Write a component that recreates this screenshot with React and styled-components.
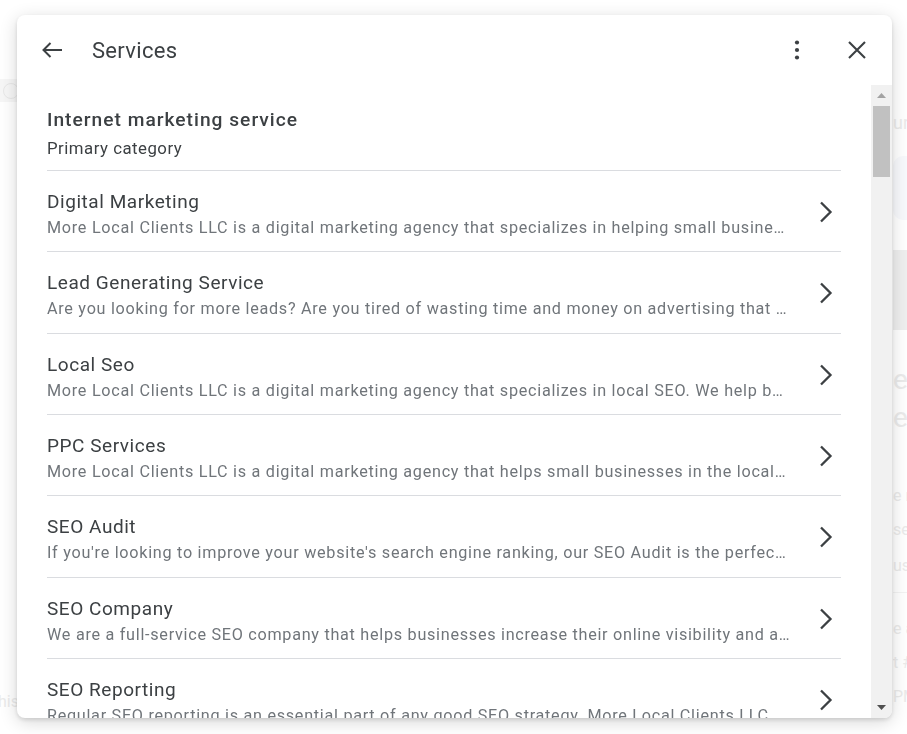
import React from "react";
import styled, { createGlobalStyle } from "styled-components";

const GlobalStyle = createGlobalStyle`
  html, body {
    margin: 0;
    padding: 0;
    background: #ffffff;
    font-family: Roboto, "Liberation Sans", Arial, sans-serif;
    overflow: hidden;
  }
`;

const Page = styled.div`
  width: 907px;
  height: 734px;
  display: flex;
  justify-content: space-between;
  overflow: hidden;
`;

const LeftRail = styled.div`
  width: 17px;
  display: flex;
  flex-direction: column;
  overflow: hidden;
`;

const SearchPill = styled.div`
  margin-top: 79px;
  height: 23px;
  background: #f6f6f6;
  display: flex;
  align-items: center;
  padding-left: 3px;
`;

const Ring = styled.span`
  width: 14px;
  height: 14px;
  flex-shrink: 0;
  border: 1.5px solid #e8e8e8;
  border-radius: 50%;
`;

const FaintText = styled.div`
  color: #ebebeb;
  font-size: ${(p) => p.$size || 16}px;
  white-space: nowrap;
  margin-top: ${(p) => p.$top || 0}px;
  line-height: ${(p) => (p.$size || 16) + 4}px;
`;

const RightRail = styled.div`
  width: 14px;
  display: flex;
  flex-direction: column;
  overflow: hidden;
`;

const FaintBox = styled.div`
  width: 40px;
  height: ${(p) => p.$h}px;
  margin-top: ${(p) => p.$top}px;
  background: ${(p) => p.$bg};
  border-radius: ${(p) => p.$r || 0}px;
`;

const FaintRule = styled.div`
  height: 1px;
  background: #f3f3f3;
  margin-top: ${(p) => p.$top}px;
`;

const Dialog = styled.div`
  position: fixed;
  top: 15px;
  left: 17px;
  width: 875px;
  height: 703px;
  background: #ffffff;
  border-radius: 8px;
  box-shadow: 0 2px 4px rgba(0, 0, 0, 0.12), 0 4px 18px rgba(0, 0, 0, 0.16);
  overflow: hidden;
  display: flex;
  flex-direction: column;
`;

const Header = styled.div`
  height: 70px;
  flex-shrink: 0;
  display: flex;
  align-items: center;
  padding: 0 15px;
`;

const IconButton = styled.button`
  width: 40px;
  height: 40px;
  border: none;
  background: transparent;
  padding: 0;
  display: flex;
  align-items: center;
  justify-content: center;
  color: #3c4043;
  cursor: pointer;
`;

const Title = styled.h1`
  margin: 0 0 0 20px;
  flex: 1;
  font-size: 22px;
  font-weight: 400;
  color: #3c4043;
  letter-spacing: 0.3px;
`;

const Actions = styled.div`
  display: flex;
  gap: 20px;
`;

const Body = styled.div`
  flex: 1;
  min-height: 0;
  display: flex;
`;

const List = styled.div`
  flex: 1;
  min-width: 0;
  overflow: hidden;
  padding: 0 30px;
`;

const Primary = styled.div`
  padding: 23px 0 11px;
  border-bottom: 1px solid #dadce0;
`;

const PrimaryName = styled.div`
  font-size: 19.2px;
  line-height: 24px;
  font-weight: 500;
  color: #3c4043;
  letter-spacing: 1px;
`;

const PrimaryLabel = styled.div`
  margin-top: 5px;
  font-size: 16.8px;
  line-height: 22px;
  color: #3c4043;
  letter-spacing: 0.5px;
`;

const Row = styled.div`
  display: flex;
  align-items: center;
  padding: 19px 0 12.33px;
  border-bottom: 1px solid #dadce0;
  cursor: pointer;
`;

const RowText = styled.div`
  width: 743px;
  min-width: 0;
`;

const RowTitle = styled.div`
  font-size: 19px;
  line-height: 24px;
  color: #3c4043;
  letter-spacing: 0.55px;
  margin-bottom: 3px;
`;

const RowDesc = styled.div`
  font-size: 16.2px;
  line-height: 22px;
  color: #70757a;
  letter-spacing: 0.72px;
  white-space: nowrap;
  overflow: hidden;
  text-overflow: ellipsis;
`;

const Chevron = styled.div`
  flex: 1;
  display: flex;
  justify-content: flex-end;
  padding: 0 8px 5px 0;
  color: #3c4043;
`;

const Scrollbar = styled.div`
  width: 21px;
  flex-shrink: 0;
  background: #f1f1f1;
  display: flex;
  flex-direction: column;
`;

const ScrollButton = styled.div`
  height: 21px;
  display: flex;
  align-items: center;
  justify-content: center;
  color: ${(p) => (p.$disabled ? "#a3a3a3" : "#505050")};
`;

const Thumb = styled.div`
  height: 71px;
  margin: 0 2px;
  background: #c1c1c1;
`;

const Gap = styled.div`
  flex: 1;
`;

const services = [
  {
    title: "Digital Marketing",
    desc: "More Local Clients LLC is a digital marketing agency that specializes in helping small businesses grow their online presence and reach more customers.",
  },
  {
    title: "Lead Generating Service",
    desc: "Are you looking for more leads? Are you tired of wasting time and money on advertising that doesn't work? We can help.",
  },
  {
    title: "Local Seo",
    desc: "More Local Clients LLC is a digital marketing agency that specializes in local SEO. We help businesses rank higher in local search.",
  },
  {
    title: "PPC Services",
    desc: "More Local Clients LLC is a digital marketing agency that helps small businesses in the local area get more customers.",
  },
  {
    title: "SEO Audit",
    desc: "If you're looking to improve your website's search engine ranking, our SEO Audit is the perfect place to start.",
  },
  {
    title: "SEO Company",
    desc: "We are a full-service SEO company that helps businesses increase their online visibility and attract more customers.",
  },
  {
    title: "SEO Reporting",
    desc: "Regular SEO reporting is an essential part of any good SEO strategy. More Local Clients LLC provides clear monthly reports.",
  },
  {
    title: "SEO Services",
    desc: "Our SEO services help local businesses rank higher on Google and turn searches into calls.",
  },
];

const BackIcon = () => (
  <svg width="22" height="18" viewBox="0 0 22 18" fill="none">
    <path d="M21 9H2.5M9.5 2L2.5 9l7 7" stroke="currentColor" strokeWidth="2" />
  </svg>
);

const MoreIcon = () => (
  <svg width="24" height="24" viewBox="0 0 24 24" fill="currentColor">
    <circle cx="12" cy="4.5" r="2.1" />
    <circle cx="12" cy="12" r="2.1" />
    <circle cx="12" cy="19.5" r="2.1" />
  </svg>
);

const CloseIcon = () => (
  <svg width="20" height="20" viewBox="0 0 20 20" fill="none">
    <path d="M2 2l16 16M18 2L2 18" stroke="currentColor" strokeWidth="2.1" />
  </svg>
);

const ChevronIcon = () => (
  <svg width="14" height="22" viewBox="0 0 14 22" fill="none">
    <path d="M2 1.5l9.5 9.5L2 20.5" stroke="currentColor" strokeWidth="2.3" />
  </svg>
);

const Triangle = ({ up }) => (
  <svg width="9" height="5" viewBox="0 0 9 5" fill="currentColor">
    <path d={up ? "M0 5L4.5 0 9 5z" : "M0 0L4.5 5 9 0z"} />
  </svg>
);

export default function App() {
  return (
    <>
      <GlobalStyle />
      <Page>
        <LeftRail>
          <SearchPill>
            <Ring />
          </SearchPill>
          <Gap />
          <FaintText $size={16} style={{ marginBottom: 22, marginLeft: -2 }}>
            his
          </FaintText>
        </LeftRail>
        <RightRail>
          <FaintText $top={112} $size={18}>
            ur
          </FaintText>
          <FaintBox $top={22} $h={64} $bg="#f8f9fc" $r={10} />
          <FaintBox $top={30} $h={80} $bg="#efefef" />
          <FaintText $top={34} $size={28}>
            e
          </FaintText>
          <FaintText $top={6} $size={28}>
            er
          </FaintText>
          <FaintText $top={52} $size={16}>
            e r
          </FaintText>
          <FaintText $top={14} $size={16}>
            se
          </FaintText>
          <FaintText $top={16} $size={16}>
            us
          </FaintText>
          <FaintRule $top={16} />
          <FaintText $top={26} $size={16}>
            e a
          </FaintText>
          <FaintText $top={14} $size={16}>
            t #
          </FaintText>
          <FaintText $top={14} $size={16}>
            PM
          </FaintText>
        </RightRail>
      </Page>

      <Dialog>
        <Header>
          <IconButton aria-label="Back">
            <BackIcon />
          </IconButton>
          <Title>Services</Title>
          <Actions>
            <IconButton aria-label="More options">
              <MoreIcon />
            </IconButton>
            <IconButton aria-label="Close">
              <CloseIcon />
            </IconButton>
          </Actions>
        </Header>

        <Body>
          <List>
            <Primary>
              <PrimaryName>Internet marketing service</PrimaryName>
              <PrimaryLabel>Primary category</PrimaryLabel>
            </Primary>
            {services.map((s) => (
              <Row key={s.title}>
                <RowText>
                  <RowTitle>{s.title}</RowTitle>
                  <RowDesc>{s.desc}</RowDesc>
                </RowText>
                <Chevron>
                  <ChevronIcon />
                </Chevron>
              </Row>
            ))}
          </List>
          <Scrollbar>
            <ScrollButton $disabled>
              <Triangle up />
            </ScrollButton>
            <Thumb />
            <Gap />
            <ScrollButton>
              <Triangle />
            </ScrollButton>
          </Scrollbar>
        </Body>
      </Dialog>
    </>
  );
}
